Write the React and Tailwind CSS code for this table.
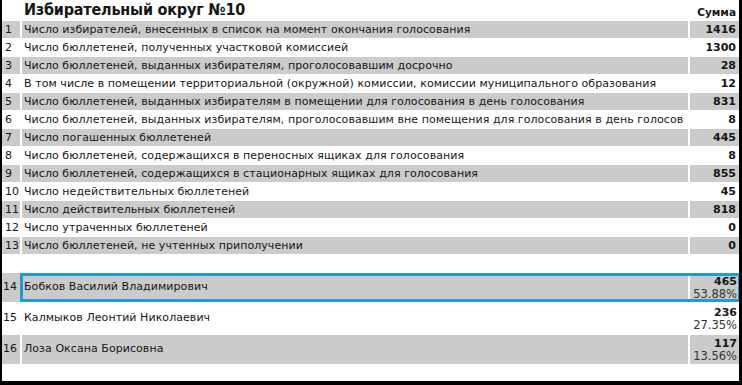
const stats = [
  [1, 'Число избирателей, внесенных в список на момент окончания голосования', '1416'],
  [2, 'Число бюллетеней, полученных участковой комиссией', '1300'],
  [3, 'Число бюллетеней, выданных избирателям, проголосовавшим досрочно', '28'],
  [4, 'В том числе в помещении территориальной (окружной) комиссии, комиссии муниципального образования', '12'],
  [5, 'Число бюллетеней, выданных избирателям в помещении для голосования в день голосования', '831'],
  [6, 'Число бюллетеней, выданных избирателям, проголосовавшим вне помещения для голосования в день голосов', '8'],
  [7, 'Число погашенных бюллетеней', '445'],
  [8, 'Число бюллетеней, содержащихся в переносных ящиках для голосования', '8'],
  [9, 'Число бюллетеней, содержащихся в стационарных ящиках для голосования', '855'],
  [10, 'Число недействительных бюллетеней', '45'],
  [11, 'Число действительных бюллетеней', '818'],
  [12, 'Число утраченных бюллетеней', '0'],
  [13, 'Число бюллетеней, не учтенных приполучении', '0'],
];

const candidates = [
  { n: 14, name: 'Бобков Василий Владимирович', votes: '465', pct: '53.88%', win: true },
  { n: 15, name: 'Калмыков Леонтий Николаевич', votes: '236', pct: '27.35%' },
  { n: 16, name: 'Лоза Оксана Борисовна', votes: '117', pct: '13.56%' },
];

const cols = 'grid grid-cols-[18px_1fr_49px] gap-x-[2px]';

export default function App() {
  return (
    <div
      className="w-[742px] h-[385px] bg-white border-l-2 border-r-[3px] border-b-[4px] border-black text-[11px] text-[#161616] overflow-hidden"
      style={{ fontFamily: '"DejaVu Sans", Verdana, sans-serif' }}
    >
      <div className="flex flex-col gap-y-[2px]">
        {/* Title */}
        <div className={cols + ' h-[19px]'}>
          <div />
          <div className="pl-[2px] text-[16px] font-bold leading-[19px] tracking-[-0.2px]" style={{ fontFamily: '"DejaVu Sans Condensed", "DejaVu Sans", sans-serif' }}>
            Избирательный округ №10
          </div>
          <div className="text-right pr-[3px] font-bold leading-[24px] text-[10.5px]">Сумма</div>
        </div>

        {stats.map(([n, label, value]) => {
          const gray = n % 2 === 1;
          const bg = gray ? 'bg-[#cbcbcb]' : 'bg-white';
          return (
            <div key={n} className={cols + ' h-[16px] leading-[17px]'}>
              <div className={bg + ' pl-[3px]'}>{n}</div>
              <div className={bg + ' pl-[2px] whitespace-nowrap overflow-hidden tracking-[0.06px]'}>{label}</div>
              <div className={bg + ' pr-[3px] text-right font-bold'}>{value}</div>
            </div>
          );
        })}

        <div className="h-[16px]" />

        {candidates.map((c) => {
          const bg = c.n % 2 === 0 ? 'bg-[#cbcbcb]' : 'bg-white';
          return (
            <div key={c.n} className={cols + ' h-[29px]'}>
              <div className={bg + ' flex items-center pl-[1px]'}>{c.n}</div>
              <div className="relative col-span-2 grid grid-cols-[1fr_49px] gap-x-[2px]">
                <div className={bg + ' flex items-center pl-[2px] whitespace-nowrap tracking-[0.06px]'}>{c.name}</div>
                <div className={bg + ' flex flex-col items-end justify-center pr-[2px] leading-[13px]'}>
                  <span className="font-bold">{c.votes}</span>
                  <span className="text-[#333] text-[11.5px]">{c.pct}</span>
                </div>
                {c.win && (
                  <div className="absolute -left-[2px] -right-[2px] top-0 bottom-0 border-[3px] border-[#1c9cd8]" />
                )}
              </div>
            </div>
          );
        })}
      </div>
    </div>
  );
}
